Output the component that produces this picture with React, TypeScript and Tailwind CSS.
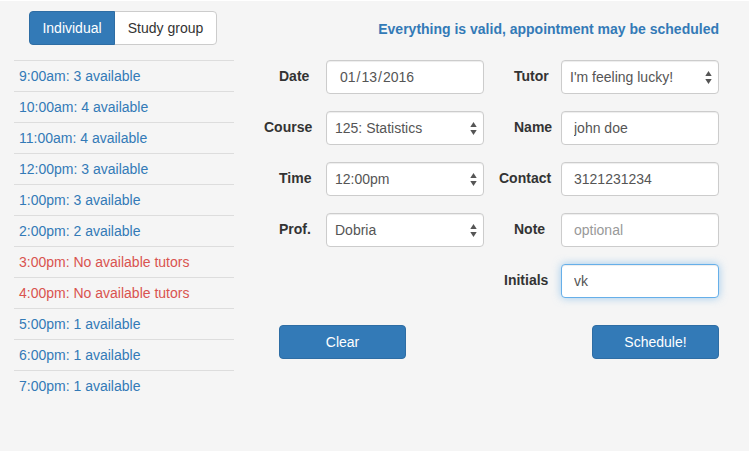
import React, { useState } from "react";

const slots = [
  { time: "9:00am", tutors: 3 },
  { time: "10:00am", tutors: 4 },
  { time: "11:00am", tutors: 4 },
  { time: "12:00pm", tutors: 3 },
  { time: "1:00pm", tutors: 3 },
  { time: "2:00pm", tutors: 2 },
  { time: "3:00pm", tutors: 0 },
  { time: "4:00pm", tutors: 0 },
  { time: "5:00pm", tutors: 1 },
  { time: "6:00pm", tutors: 1 },
  { time: "7:00pm", tutors: 1 },
];

const controlBase = "block h-[34px] w-full rounded border bg-white text-sm text-[#555] outline-none";
const restingBorder = "border-[#ccc] shadow-[inset_0_1px_1px_rgba(0,0,0,0.075)]";
const activeBorder =
  "border-[#66afe9] shadow-[inset_0_1px_1px_rgba(0,0,0,0.075),0_0_8px_rgba(102,175,233,0.6)]";

type FieldProps = { id: string; label: string; indent?: string; children: React.ReactNode };

function Field({ id, label, indent = "pl-[15px]", children }: FieldProps) {
  return (
    <div className="flex items-start">
      <label htmlFor={id} className={`w-[62px] shrink-0 pt-[6px] font-bold ${indent}`}>
        {label}
      </label>
      <div className="min-w-0 flex-1">{children}</div>
    </div>
  );
}

type TextBoxProps = React.InputHTMLAttributes<HTMLInputElement> & { active?: boolean };

function TextBox({ active = false, ...rest }: TextBoxProps) {
  return (
    <input
      type="text"
      {...rest}
      className={`${controlBase} px-3 placeholder:text-[#999] [&::-webkit-calendar-picker-indicator]:hidden ${
        active ? activeBorder : restingBorder
      }`}
    />
  );
}

function SelectBox({ id, options }: { id: string; options: string[] }) {
  return (
    <div className="relative">
      <select id={id} className={`${controlBase} ${restingBorder} appearance-none pr-5 pl-2`}>
        {options.map((option) => (
          <option key={option}>{option}</option>
        ))}
      </select>
      <svg
        viewBox="0 0 7 13"
        className="pointer-events-none absolute top-[11px] right-[7px] h-[13px] w-[7px] fill-[#555]"
        aria-hidden="true"
      >
        <path d="M3.5 0L6.7 5H0.3z" />
        <path d="M3.5 13L6.7 8H0.3z" />
      </svg>
    </div>
  );
}

const primaryButton = "h-[34px] w-[127px] rounded border border-[#2e6da4] bg-[#337ab7] text-white";

export default function App() {
  const [mode, setMode] = useState("individual");
  const tab = (name: string) =>
    mode === name
      ? "relative border-[#2e6da4] bg-[#337ab7] text-white"
      : "border-[#ccc] bg-white text-[#333]";

  return (
    <main className="flex min-h-screen flex-col gap-[30px] border-t border-r border-white bg-[#f5f5f5] pt-[10px] pr-[30px] pb-6 pl-[14px] font-['Liberation_Sans',Arial,sans-serif] text-sm text-[#333] sm:flex-row">
      <section className="w-full shrink-0 sm:w-[220px]">
        <div className="flex pl-[15px]">
          <button
            type="button"
            onClick={() => setMode("individual")}
            className={`h-[34px] w-[86px] rounded-l border ${tab("individual")}`}
          >
            Individual
          </button>
          <button
            type="button"
            onClick={() => setMode("group")}
            className={`-ml-px h-[34px] w-[103px] rounded-r border ${tab("group")}`}
          >
            Study group
          </button>
        </div>
        <table className="mt-[15px] w-full">
          <tbody>
            {slots.map(({ time, tutors }) => (
              <tr key={time} className="border-t border-[#ddd]">
                <td className={`p-[5px] ${tutors ? "text-[#337ab7]" : "text-[#d9534f]"}`}>
                  {time}: {tutors || "No"} available{tutors ? "" : " tutors"}
                </td>
              </tr>
            ))}
          </tbody>
        </table>
      </section>

      <form className="min-w-0 flex-1" onSubmit={(event) => event.preventDefault()}>
        <p className="pt-2 text-right font-bold text-[#337ab7]">
          Everything is valid, appointment may be scheduled
        </p>
        <div className="mt-[21px] grid gap-[15px] sm:grid-cols-2">
          <div className="flex flex-col gap-[17px]">
            <Field id="date" label="Date">
              <TextBox id="date" type="date" defaultValue="2016-01-13" />
            </Field>
            <Field id="course" label="Course" indent="pl-0">
              <SelectBox id="course" options={["125: Statistics"]} />
            </Field>
            <Field id="time" label="Time">
              <SelectBox id="time" options={["12:00pm"]} />
            </Field>
            <Field id="professor" label="Prof.">
              <SelectBox id="professor" options={["Dobria"]} />
            </Field>
          </div>
          <div className="flex flex-col gap-[17px]">
            <Field id="tutor" label="Tutor">
              <SelectBox id="tutor" options={["I'm feeling lucky!"]} />
            </Field>
            <Field id="name" label="Name">
              <TextBox id="name" defaultValue="john doe" />
            </Field>
            <Field id="contact" label="Contact" indent="pl-0">
              <TextBox id="contact" defaultValue="3121231234" />
            </Field>
            <Field id="note" label="Note">
              <TextBox id="note" placeholder="optional" />
            </Field>
            <Field id="initials" label="Initials" indent="pl-[5px]">
              <TextBox id="initials" defaultValue="vk" active />
            </Field>
          </div>
        </div>
        <div className="mt-[27px] flex justify-between gap-4 pl-[15px]">
          <button type="reset" className={primaryButton}>
            Clear
          </button>
          <button type="submit" className={primaryButton}>
            Schedule!
          </button>
        </div>
      </form>
    </main>
  );
}
